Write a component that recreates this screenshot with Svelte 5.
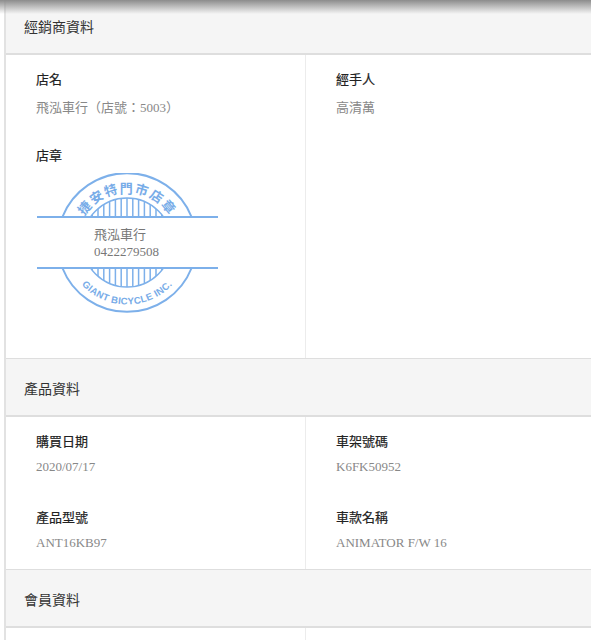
<script>
	// vertical stripes of the stamp's inner circle
	const bars = Array.from({ length: 13 }, (_, i) => 55.2 + i * 5.8);
</script>

<style>
	:global(body) {
		overflow: hidden;
		background: #fff;
	}

	.shade {
		position: absolute;
		top: 0;
		left: 0;
		right: 0;
		height: 14px;
		background: linear-gradient(to bottom, #8c8c8c, rgba(170, 170, 170, 0));
	}

	.page {
		margin-left: 4px;
		border-left: 2px solid #e2e2e2;
		font-family: "Liberation Serif", "Noto Sans CJK TC", serif;
		font-size: 13px;
	}

	h2 {
		margin: 0;
		height: 59px;
		padding: 2px 0 0 18px;
		box-sizing: border-box;
		display: flex;
		align-items: center;
		background: #f5f5f5;
		border-top: 1px solid #dedede;
		border-bottom: 2px solid #dedede;
		font: 400 14px "Noto Sans CJK TC", sans-serif;
		color: #333;
	}

	h2.first {
		height: 55px;
		padding-top: 0;
		padding-bottom: 1px;
		border-top: 0;
	}

	.grid {
		display: grid;
		grid-template-columns: 300px 1fr;
	}

	.cell {
		height: 76px;
		padding: 15px 0 0 30px;
		box-sizing: border-box;
	}

	.cell:nth-child(odd) {
		border-right: 1px solid #ececec;
	}

	.tall {
		height: 227px;
	}

	.label {
		font: 400 13px/17px "Noto Sans CJK TC", sans-serif;
		color: #222;
		-webkit-text-stroke: 0.2px #222;
	}

	.value {
		margin-top: 12px;
		line-height: 17px;
		color: #888;
	}

	.value.tight {
		margin-top: 9px;
	}

	.stamp {
		display: block;
		margin: 10px 0 0 1px;
	}

	.ring {
		fill: none;
		stroke: #7db0ea;
		stroke-width: 2;
	}

	.thin {
		stroke-width: 1.5;
	}

	.arc-top {
		font: 700 13px "Noto Sans CJK TC", sans-serif;
		letter-spacing: 1.5px;
		fill: #78ace8;
	}

	.arc-bottom {
		font: 700 9.6px "Liberation Sans", sans-serif;
		letter-spacing: 0.3px;
		fill: #78ace8;
	}

	.shop {
		font: 400 13px "Noto Sans CJK TC", sans-serif;
		fill: #777;
	}

	.phone {
		font: 400 13px "Liberation Serif", serif;
		fill: #777;
	}
</style>

<div class="page">
	<h2 class="first">經銷商資料</h2>
	<div class="grid">
		<div class="cell">
			<div class="label">店名</div>
			<div class="value">飛泓車行（店號：5003）</div>
		</div>
		<div class="cell">
			<div class="label">經手人</div>
			<div class="value">高清萬</div>
		</div>
		<div class="cell tall">
			<div class="label">店章</div>
			<svg class="stamp" width="182" height="142" viewBox="0 0 182 142">
				<defs>
					<clipPath id="inner-top">
						<rect x="0" y="0" width="182" height="44" />
					</clipPath>
					<clipPath id="inner-bottom">
						<rect x="0" y="95" width="182" height="47" />
					</clipPath>
					<clipPath id="inner-disc">
						<circle cx="90" cy="69.5" r="44.5" />
					</clipPath>
					<path id="text-top" d="M 40 69.5 A 50 50 0 0 1 140 69.5" />
					<path id="text-bottom" d="M 28 69.5 A 62 62 0 0 0 152 69.5" />
				</defs>

				<path class="ring" d="M 25.4 44 A 69.5 69.5 0 0 1 154.6 44" />
				<path class="ring" d="M 25.4 95 A 69.5 69.5 0 0 0 154.6 95" />

				<g clip-path="url(#inner-top)">
					<circle class="ring thin" cx="90" cy="69.5" r="44.5" />
					<g clip-path="url(#inner-disc)">
						{#each bars as x}
							<line class="ring thin" x1={x} x2={x} y1="20" y2="44" />
						{/each}
					</g>
				</g>
				<g clip-path="url(#inner-bottom)">
					<circle class="ring thin" cx="90" cy="69.5" r="44.5" />
					<g clip-path="url(#inner-disc)">
						{#each bars as x}
							<line class="ring thin" x1={x} x2={x} y1="95" y2="118" />
						{/each}
					</g>
				</g>

				<line class="ring" x1="0" x2="181" y1="44" y2="44" />
				<line class="ring" x1="0" x2="181" y1="95" y2="95" />

				<text class="arc-top"><textPath href="#text-top" startOffset="50%" text-anchor="middle">捷安特門市店章</textPath></text>
				<text class="arc-bottom"><textPath href="#text-bottom" startOffset="50%" text-anchor="middle">GIANT BICYCLE INC.</textPath></text>

				<text class="shop" x="57" y="66">飛泓車行</text>
				<text class="phone" x="57" y="83">0422279508</text>
			</svg>
		</div>
		<div class="cell tall"></div>
	</div>

	<h2>產品資料</h2>
	<div class="grid">
		<div class="cell">
			<div class="label">購買日期</div>
			<div class="value tight">2020/07/17</div>
		</div>
		<div class="cell">
			<div class="label">車架號碼</div>
			<div class="value tight">K6FK50952</div>
		</div>
		<div class="cell">
			<div class="label">產品型號</div>
			<div class="value tight">ANT16KB97</div>
		</div>
		<div class="cell">
			<div class="label">車款名稱</div>
			<div class="value tight">ANIMATOR F/W 16</div>
		</div>
	</div>

	<h2>會員資料</h2>
	<div class="grid">
		<div class="cell"></div>
		<div class="cell"></div>
	</div>
</div>
<div class="shade"></div>
